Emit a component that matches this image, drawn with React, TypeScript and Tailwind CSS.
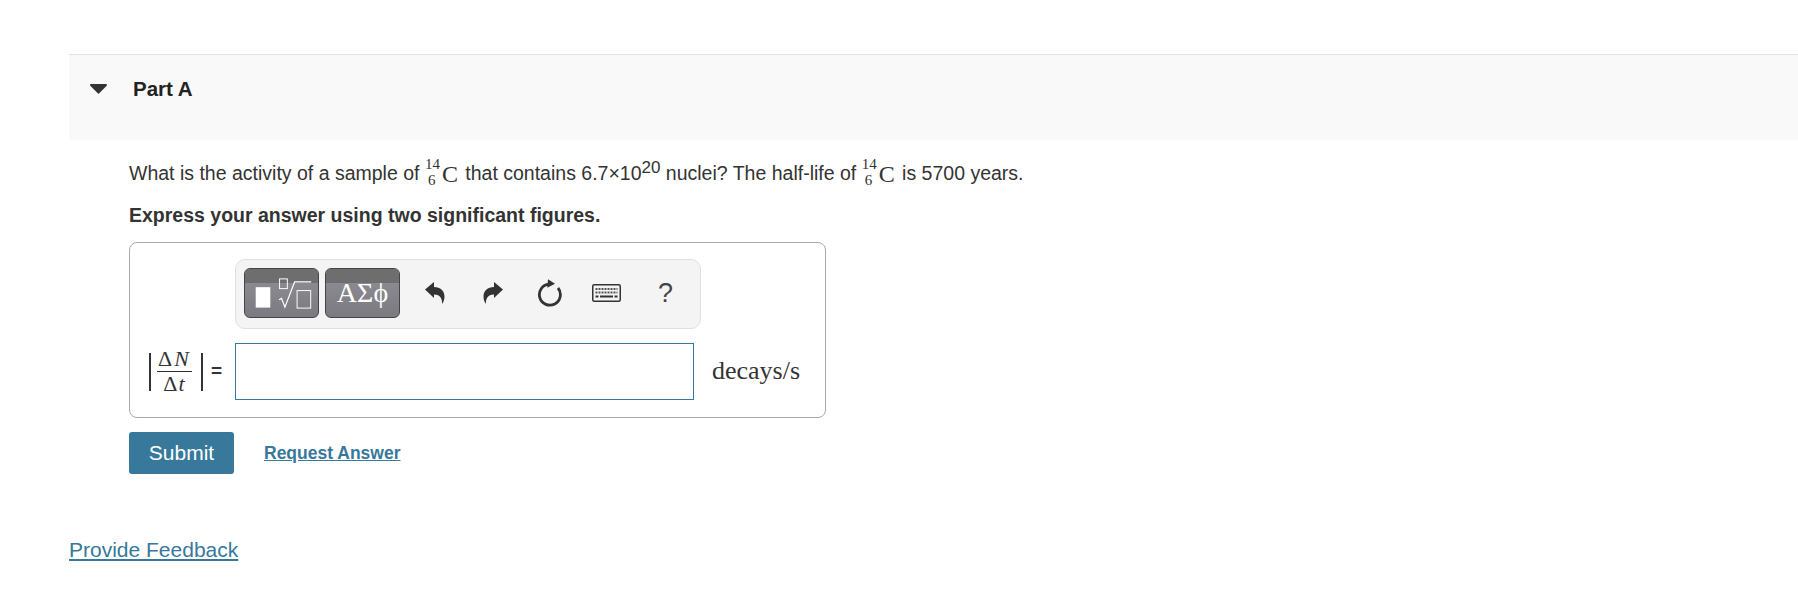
const sans = "font-['Liberation_Sans',Arial,sans-serif]";
const serif = "font-['Liberation_Serif','Times_New_Roman',serif]";

function Carbon14() {
  return (
    <span className={`mr-[2px] inline-flex items-baseline ${serif}`}>
      <span className="relative inline-block h-[20px] w-[17px] text-[15px] leading-none">
        <span className="absolute left-0 top-[-5px]">14</span>
        <span className="absolute left-[3px] top-[11px]">6</span>
      </span>
      <span className="text-[24px] leading-none">C</span>
    </span>
  );
}

function ReplyArrow({ flip }: { flip?: boolean }) {
  return (
    <svg width="22" height="24" viewBox="0 0 22 24" className={flip ? "-scale-x-100" : ""}>
      <path
        d="M1 8.500 10 1v5c6.500 0 10.500 4 10.500 9.500 0 3-1 5.500-2.500 7.500 0.500-4.500-1.500-9.500-8-9.500v3.500z"
        fill="#333"
      />
    </svg>
  );
}

function ResetIcon() {
  return (
    <svg width="26" height="30" viewBox="0 0 26 30" fill="none">
      <path d="M12 6.200A10.500 10.500 0 1 0 21 10" stroke="#333" strokeWidth="2.800" />
      <path d="M11 1.300 18 5.700 10.300 9.700z" fill="#333" />
    </svg>
  );
}

function KeyboardIcon() {
  const rows = [5, 8.500];
  return (
    <svg width="29" height="18" viewBox="0 0 29 18" fill="none">
      <rect x="0.750" y="0.750" width="27.500" height="16.500" rx="1.500" stroke="#333" strokeWidth="1.500" />
      {rows.map((y) => (
        <path key={y} d={`M3.500 ${y}H25.500`} stroke="#555" strokeWidth="1.800" strokeDasharray="2 1" />
      ))}
      <path d="M3.500 12.500h3M8 12.500H21M22.500 12.500h3" stroke="#333" strokeWidth="1.800" />
    </svg>
  );
}

function TemplateGlyph() {
  return (
    <svg width="75" height="50" viewBox="0 0 75 50" fill="none">
      <rect x="11" y="19" width="15" height="21" fill="#fff" />
      <rect x="35.500" y="10.500" width="8" height="10" stroke="#fff" strokeWidth="1" />
      <path d="M35 32l2.500-1.500 3.500 9L51 13.500H68" stroke="#fff" strokeWidth="1.300" />
      <rect x="53.500" y="22.500" width="14" height="18" stroke="#fff" strokeWidth="1" />
    </svg>
  );
}

function ToolButton({ children }: { children: React.ReactNode }) {
  return (
    <button
      type="button"
      className="relative h-[50px] w-[75px] overflow-hidden rounded-[6px] border border-[#444] bg-[linear-gradient(#919096,#7b7a80)]"
    >
      <span className="absolute inset-x-0 top-0 h-[14px] bg-[#6e6e6e]" />
      <span className="relative flex h-full items-center justify-center">{children}</span>
    </button>
  );
}

export default function App() {
  return (
    <div className={`h-[600px] overflow-hidden bg-white pl-[69px] pt-[54px] text-[#333] ${sans}`}>
      <div className="flex h-[86px] items-start border-t border-[#e3e3e3] bg-[#f9f9f9] pl-[21px] pt-[21px]">
        <svg width="17" height="10" viewBox="0 0 17 10" className="mt-[8px]">
          <path d="M1 0H16a1 1 0 0 1 .7 1.700L9.500 9a1.200 1.200 0 0 1-2 0L.3 1.700A1 1 0 0 1 1 0z" fill="#333" />
        </svg>
        <h2 className="ml-[26px] text-[20.500px] font-bold leading-[26px] text-[#222]">Part A</h2>
      </div>

      <div className="pl-[60px]">
        <p className="mt-[17px] flex h-[34px] items-center whitespace-pre text-[19.500px]">
          What is the activity of a sample of <Carbon14 /> that contains 6.7×10
          <span className="relative top-[-7px] text-[17px] leading-none">20</span> nuclei? The half-life of <Carbon14 /> is 5700 years.
        </p>
        <p className="mt-[11px] text-[19.500px] font-bold leading-[26px]">Express your answer using two significant figures.</p>

        <div className="mt-[14px] h-[176px] w-[697px] rounded-[8px] border border-[#a9a9a9] pl-[105px] pt-[16px]">
          <div className="flex h-[70px] w-[466px] items-start rounded-[10px] border border-[#e0e0e0] bg-[#f4f4f4] pl-[8px] pt-[8px]">
            <div className="flex gap-[6px]">
              <ToolButton>
                <TemplateGlyph />
              </ToolButton>
              <ToolButton>
                <span className={`text-[28px] leading-none text-white ${serif}`}>ΑΣϕ</span>
              </ToolButton>
            </div>
            <div className="ml-[24px] flex h-[50px] items-center">
              <ReplyArrow />
              <span className="ml-[36px]">
                <ReplyArrow flip />
              </span>
              <span className="ml-[33px]">
                <ResetIcon />
              </span>
              <span className="ml-[29px]">
                <KeyboardIcon />
              </span>
              <span className="ml-[37px] text-[27px] leading-none text-[#444]">?</span>
            </div>
          </div>

          <div className="relative mt-[14px] flex items-center">
            <div className="absolute right-[100%] mr-[13px] flex items-center">
              <span className="h-[38px] w-[1.500px] bg-[#333]" />
              <span className={`ml-[6px] mr-[9px] flex w-[35px] flex-col items-center text-[22px] leading-[22px] ${serif}`}>
                <span className="w-full whitespace-nowrap border-b border-[#333] pb-[1px] text-center tracking-[2px]">
                  Δ<i>N</i>
                </span>
                <span className="pt-[1px] tracking-[1px]">
                  Δ<i>t</i>
                </span>
              </span>
              <span className="h-[38px] w-[2px] bg-[#333]" />
              <span className="ml-[8px] text-[19px] font-bold">=</span>
            </div>
            <input
              aria-label="Answer"
              className="h-[57px] w-[459px] border border-[#37789b] bg-white outline-none"
            />
            <span className={`mb-[2px] ml-[18px] text-[26px] ${serif}`}>decays/s</span>
          </div>
        </div>

        <div className="mt-[14px] flex items-center">
          <button
            type="button"
            className="h-[42px] w-[105px] rounded-[3px] bg-[#37789b] text-[21px] text-white"
          >
            Submit
          </button>
          <a href="#" className="ml-[30px] text-[17.500px] font-bold text-[#37789b] underline">
            Request Answer
          </a>
        </div>
      </div>

      <a href="#" className="mt-[62px] inline-block text-[21px] leading-[28px] text-[#37789b] underline">
        Provide Feedback
      </a>
    </div>
  );
}
